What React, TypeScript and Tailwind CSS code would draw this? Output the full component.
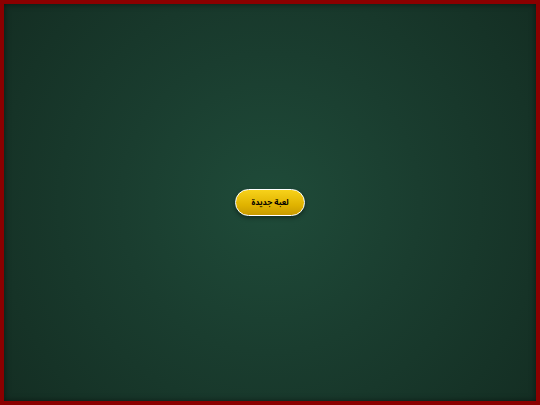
export default function App() {
  return (
    <div className="w-[540px] h-[405px] border-4 border-[#8b0000] bg-[radial-gradient(circle_at_center,#1f4b39_0%,#1a3d2f_45%,#142e23_100%)] shadow-[inset_0_0_6px_rgba(0,0,0,0.5)] flex items-center justify-center box-border">
      <button
        dir="rtl"
        className="w-[70px] h-[27px] rounded-full border border-white bg-[linear-gradient(to_bottom,#f7d21a,#e0b300_60%,#c89a00)] text-black text-[8px] font-bold shadow-[0_2px_4px_rgba(0,0,0,0.4)] flex items-center justify-center"
        style={{ fontFamily: '"Noto Sans Arabic", "Liberation Sans", sans-serif' }}
      >
        لعبة جديدة
      </button>
    </div>
  )
}
